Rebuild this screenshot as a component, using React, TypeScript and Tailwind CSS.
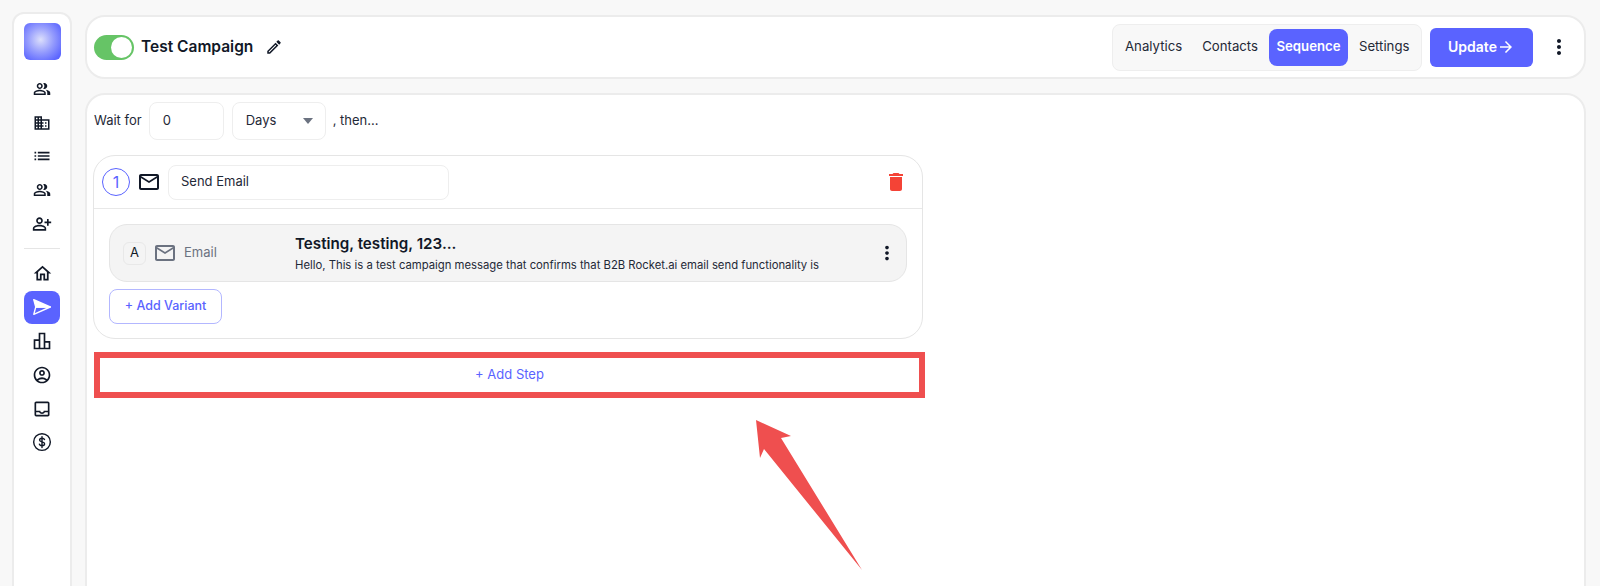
import React from 'react';
import {
  MdOutlinePeopleAlt,
  MdOutlineDomain,
  MdList,
  MdOutlinePersonAddAlt,
  MdOutlineHome,
  MdOutlineAccountCircle,
  MdOutlineInbox,
  MdOutlineMailOutline,
  MdDelete,
  MdMoreVert,
  MdOutlineEdit,
  MdOutlineArrowForward,
} from 'react-icons/md';

function SendIcon() {
  return (
    <svg width="22" height="22" viewBox="0 0 24 24" fill="white" stroke="white" strokeWidth="1.500" strokeLinejoin="round">
      <path d="M3 4l18 8H5.200z" />
      <path d="M5.200 12H21L3 20z" fill="none" />
    </svg>
  );
}

function BarsIcon() {
  return (
    <svg width="20" height="20" viewBox="0 0 24 24" fill="none" stroke="#111827" strokeWidth="2">
      <path d="M3 21v-10h6v10zM9 21V3h6v18zM15 21v-8h6v8z" />
    </svg>
  );
}

function DollarIcon() {
  return (
    <svg width="20" height="20" viewBox="0 0 24 24" fill="none" stroke="#111827" strokeWidth="1.700" strokeLinecap="round">
      <circle cx="12" cy="12" r="10" />
      <path d="M15 9c-.4-1-1.500-1.600-3-1.600-1.700 0-2.900.9-2.900 2.200 0 3 6 1.600 6 4.600 0 1.300-1.300 2.300-3.100 2.300-1.500 0-2.700-.7-3.100-1.800M12 5.500v13" />
    </svg>
  );
}

const topIcons = [
  <MdOutlinePeopleAlt size={18} />,
  <MdOutlineDomain size={18} />,
  <MdList size={20} />,
  <MdOutlinePeopleAlt size={18} />,
  <MdOutlinePersonAddAlt size={20} />,
];

const bottomIcons = [
  <MdOutlineHome size={21} />,
  <SendIcon />,
  <BarsIcon />,
  <MdOutlineAccountCircle size={20} />,
  <MdOutlineInbox size={20} />,
  <DollarIcon />,
];

function Sidebar() {
  return (
    <aside className="ml-3 mt-3 h-[640px] w-[60px] shrink-0 rounded-t-xl border-2 border-[#ececec] bg-white flex flex-col items-center pt-[9px]">
      <div className="h-[37px] w-[37px] rounded-md bg-[radial-gradient(circle_at_45%_45%,#dcdffb_0%,#959cfd_45%,#5c66ff_85%)]" />
      <div className="mt-[12px] flex flex-col items-center text-[#111827]">
        {topIcons.map((icon, i) => (
          <div key={i} className="h-[33.750px] flex items-center justify-center">{icon}</div>
        ))}
      </div>
      <div className="mt-[7px] h-px w-9 bg-[#e5e5e5]" />
      <div className="mt-[8px] flex flex-col items-center text-[#111827]">
        {bottomIcons.map((icon, i) => (
          <div
            key={i}
            className={
              i === 1
                ? 'h-[33.750px] w-9 rounded-lg bg-[#5a63ff] flex items-center justify-center'
                : 'h-[33.750px] w-9 flex items-center justify-center'
            }
          >
            {icon}
          </div>
        ))}
      </div>
    </aside>
  );
}

function Header() {
  return (
    <header className="h-[64px] rounded-[20px] border-2 border-[#ececec] bg-white flex items-center pl-[7px] pr-[13px]">
      <div className="h-[25px] w-10 rounded-full bg-[#66c466] flex items-center justify-end pr-[2px]">
        <div className="h-[21px] w-[21px] rounded-full bg-white" />
      </div>
      <span className="ml-[7px] text-[15.500px] font-semibold text-[#111827]">Test Campaign</span>
      <MdOutlineEdit size={18} className="ml-3 text-[#111827]" />
      <div className="ml-auto flex h-[47px] w-[310px] items-center rounded-lg border border-[#eeeeee] bg-[#f8f8f8] pl-[12px] text-[13.200px] text-[#1f2937]">
        <span>Analytics</span>
        <span className="ml-[20px]">Contacts</span>
        <span className="ml-[11px] flex h-[37px] w-[79px] items-center justify-center rounded-lg bg-[#5a63ff] font-semibold text-white">Sequence</span>
        <span className="ml-[11px]">Settings</span>
      </div>
      <button className="ml-2 flex h-[39px] w-[103px] items-center justify-center rounded-md bg-[#5a63ff] text-sm font-semibold text-white">
        Update
        <MdOutlineArrowForward size={18} />
      </button>
      <MdMoreVert size={24} className="ml-[14px] text-[#111827]" />
    </header>
  );
}

function WaitRow() {
  return (
    <div className="ml-px flex items-center text-[13px] text-[#1f2937]">
      <span>Wait for</span>
      <div className="ml-[7px] flex h-[38px] w-[75px] items-center rounded-lg border border-[#eeeeee] pl-[13px]">0</div>
      <div className="ml-2 flex h-[38px] w-[94px] items-center justify-between rounded-lg border border-[#eeeeee] pl-[13px] pr-[12px]">
        Days
        <svg width="10" height="6" viewBox="0 0 10 6" fill="#6b7280"><path d="M0 0h10L5 6z" /></svg>
      </div>
      <span className="ml-[7px]">, then...</span>
    </div>
  );
}

function VariantRow() {
  return (
    <div className="h-[58px] rounded-[18px] border border-[#e5e5e5] bg-[#f4f4f4] flex items-center pl-[13px] pr-2">
      <div className="h-[23px] w-[23px] rounded-md border border-[#e8e8e8] flex items-center justify-center text-[13px] text-[#111827]">A</div>
      <MdOutlineMailOutline size={24} className="ml-[7px] text-[#6b7280]" />
      <span className="ml-[7px] w-[111px] text-[13px] text-[#6b7280]">Email</span>
      <div className="min-w-0 flex-1">
        <div className="text-[15.200px] leading-[20px] font-semibold text-[#111827]">Testing, testing, 123...</div>
        <div className="mt-[3px] text-[11.300px] leading-[16px] text-[#1f2937] whitespace-nowrap">
          Hello, This is a test campaign message that confirms that B2B Rocket.ai email send functionality is
        </div>
      </div>
      <MdMoreVert size={22} className="text-[#111827]" />
    </div>
  );
}

function StepCard() {
  return (
    <section className="mt-[15px] w-[830px] rounded-[22px] border border-[#e5e5e5] bg-white">
      <div className="h-[53px] border-b border-[#e8e8e8] flex items-center pl-2 pr-[14px]">
        <div className="h-7 w-7 rounded-full border border-[#5a63ff] flex items-center justify-center text-base text-[#5a63ff]">1</div>
        <MdOutlineMailOutline size={24} className="ml-[7px] text-[#111827]" />
        <div className="ml-[7px] h-[35px] w-[281px] rounded-lg border border-[#eeeeee] flex items-center pl-[12px] text-[13px] text-[#1f2937]">Send Email</div>
        <MdDelete size={24} className="ml-auto text-[#f44336]" />
      </div>
      <div className="px-[15px] pt-[15px] pb-[14px]">
        <VariantRow />
        <button className="mt-[7px] h-[35px] w-[113px] rounded-lg border border-[#b3b7ff] bg-white text-[12.500px] font-medium text-[#5a63ff]">+ Add Variant</button>
      </div>
    </section>
  );
}

export default function App() {
  return (
    <div className="relative flex h-[586px] w-[1600px] overflow-hidden bg-[#f8f8f8] font-['Inter',sans-serif]">
      <Sidebar />
      <main className="ml-[13px] mt-[15px] w-[1501px] shrink-0">
        <Header />
        <div className="mt-[14px] h-[600px] rounded-t-[20px] border-2 border-[#ececec] bg-white pl-[6px] pt-[7px]">
          <WaitRow />
          <StepCard />
          <button className="ml-px mt-[13px] h-[46px] w-[831px] border-[6px] border-[#ef4f4f] bg-white text-[13px] text-[#5a63ff]">+ Add Step</button>
        </div>
      </main>
      {/* annotation arrow over the page */}
      <svg className="absolute left-[750px] top-[415px]" width="120" height="160" viewBox="750 415 120 160">
        <path d="M756 420L791 436L781 438L862 570L764 449L760 458Z" fill="#ef4f4f" />
      </svg>
    </div>
  );
}
